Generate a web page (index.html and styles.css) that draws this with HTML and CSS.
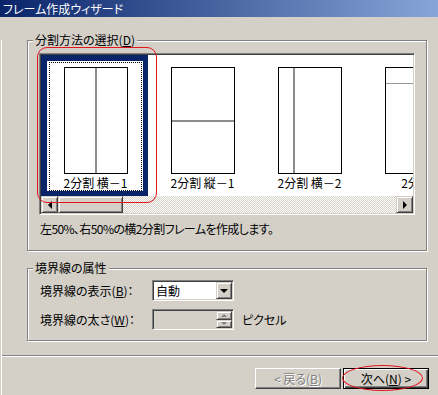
FILE: index.html
```html
<!DOCTYPE html>
<html lang="ja">

<head>
    <meta charset="UTF-8" />
    <meta name="viewport" content="width=device-width, initial-scale=1.0" />
    <link rel="stylesheet" href="styles.css">
    <title>フレーム作成ウィザード</title>
</head>

<body>

    <div class="window">
        <div class="titlebar">フレーム作成ウィザード</div>

        <div class="client">
            <!-- split type -->
            <div class="group group-split">
                <span class="group-title">分割方法の選択(<u>D</u>)</span>
                <div class="listview">
                    <div class="items">
                        <div class="item selected">
                            <div class="focus">
                                <div class="thumb cols"><div class="pane pane-half"></div></div>
                                <div class="caption">2分割 横－1</div>
                            </div>
                        </div>
                        <div class="item">
                            <div class="focus">
                                <div class="thumb rows"><div class="pane pane-half"></div></div>
                                <div class="caption">2分割 縦－1</div>
                            </div>
                        </div>
                        <div class="item">
                            <div class="focus">
                                <div class="thumb cols"><div class="pane pane-narrow"></div></div>
                                <div class="caption">2分割 横－2</div>
                            </div>
                        </div>
                        <div class="item">
                            <div class="focus">
                                <div class="thumb rows"><div class="pane pane-narrow"></div></div>
                                <div class="caption">2分割</div>
                            </div>
                        </div>
                    </div>
                    <div class="hscroll">
                        <div class="sb-btn"><span class="arrow arrow-left"></span></div>
                        <div class="sb-thumb"></div>
                        <div class="sb-track"></div>
                        <div class="sb-btn"><span class="arrow arrow-right"></span></div>
                    </div>
                </div>
                <p class="desc">左50%、右50%の横2分割フレームを作成します。</p>
            </div>

            <!-- border options -->
            <div class="group group-border">
                <span class="group-title">境界線の属性</span>
                <div class="row">
                    <span class="label">境界線の表示(<u>B</u>)：</span>
                    <div class="field">
                        <span class="value">自動</span>
                        <div class="drop-btn"><span class="arrow arrow-down"></span></div>
                    </div>
                </div>
                <div class="row">
                    <span class="label">境界線の太さ(<u>W</u>)：</span>
                    <div class="field disabled">
                        <span class="value"></span>
                        <div class="spin">
                            <div class="spin-btn"><span class="mini mini-up"></span></div>
                            <div class="spin-btn"><span class="mini mini-down"></span></div>
                        </div>
                    </div>
                    <span class="unit">ピクセル</span>
                </div>
            </div>

            <div class="separator"></div>

            <div class="buttons">
                <button class="btn" disabled>&lt; 戻る(<u>B</u>)</button>
                <button class="btn default">次へ(<u>N</u>) &gt;</button>
            </div>
        </div>

        <!-- red marks drawn over the dialog -->
        <div class="mark mark-item"></div>
        <div class="mark mark-next"></div>
    </div>

</body>

</html>
```

FILE: styles.css
```css
:root {
    --face: #d4d0c8;
    --shadow: #808080;
    --dark: #404040;
    --navy: #0a246a;
    --mark: #e2141a;
}

* {
    box-sizing: border-box;
}

body {
    margin: 0;
    background-color: var(--face);
    font-family: "Noto Sans CJK JP", sans-serif;
    font-size: 12px;
    line-height: 14px;
    color: #000;
    font-feature-settings: "palt";
}

u {
    text-decoration-thickness: 1px;
    text-underline-offset: 1px;
}

.window {
    position: relative;
    width: 438px;
    height: 395px;
    overflow: hidden;
}

.titlebar {
    height: 17px;
    line-height: 17px;
    padding-left: 3px;
    color: #fff;
    background: linear-gradient(to right, #0a246a, #86a6d8);
}

.client {
    margin-left: 1px;
    border-left: 1px solid #fff;
    height: 378px;
}

/* etched group box */
.group {
    position: relative;
    width: 400px;
    margin-left: 25px;
    border: 1px solid var(--shadow);
    box-shadow: inset 1px 1px #fff, 1px 1px #fff;
}

.group-title {
    position: absolute;
    top: -8px;
    left: 5px;
    padding: 0 2px;
    background-color: var(--face);
}

.group-split {
    margin-top: 23px;
    padding: 12px 11px 14px 11px;
}

.group-border {
    margin-top: 17px;
    padding: 11px 11px 10px 12px;
}

/* list view */
.listview {
    width: 376px;
    height: 162px;
    padding: 1px;
    background-color: #fff;
    border: 1px solid;
    border-color: var(--shadow) #fff #fff var(--shadow);
    box-shadow: inset 1px 1px var(--dark), inset -1px -1px var(--face);
}

.items {
    display: flex;
    height: 141px;
    overflow: hidden;
    background-color: #fff;
}

.item {
    flex: 0 0 107px;
    border: 6px solid transparent;
    border-bottom-width: 5px;
    border-right-width: 5px;
}

.item.selected {
    border-color: var(--navy);
}

.focus {
    display: flex;
    flex-direction: column;
    align-items: center;
    height: 129px;
    margin: 1px 1px 1px 2px;
    border: 1px dotted transparent;
}

.selected .focus {
    border-color: #000;
}

.thumb {
    display: flex;
    width: 64px;
    height: 107px;
    margin-top: 4px;
    border: 1px solid #000;
    background-color: #fff;
}

.thumb.rows {
    flex-direction: column;
}

.cols .pane {
    border-right: 2px solid #8c8c8c;
}

.rows .pane {
    border-bottom: 2px solid #8c8c8c;
}

.cols .pane-half {
    width: 32px;
}

.cols .pane-narrow {
    width: 16px;
}

.rows .pane-half {
    height: 54px;
}

.rows .pane-narrow {
    height: 16px;
    border-bottom-width: 1px;
    border-bottom-color: #999;
}

.caption {
    margin-top: 2px;
    white-space: nowrap;
    font-feature-settings: normal;
}

/* horizontal scroll bar */
.hscroll {
    display: flex;
    height: 17px;
}

.sb-btn,
.sb-thumb,
.drop-btn,
.spin-btn {
    display: flex;
    align-items: center;
    justify-content: center;
    background-color: var(--face);
    border: 1px solid;
    border-color: var(--face) var(--dark) var(--dark) var(--face);
    box-shadow: inset 1px 1px #fff, inset -1px -1px var(--shadow);
}

.sb-btn {
    flex: 0 0 17px;
}

.sb-thumb {
    flex: 0 0 65px;
}

.sb-track {
    flex: 1;
    background: repeating-conic-gradient(#fff 0 25%, var(--face) 0 50%) 0 0 / 2px 2px;
}

.arrow {
    width: 0;
    height: 0;
    border: 4px solid transparent;
}

.arrow-left {
    border-right-color: #000;
    border-left-width: 0;
}

.arrow-right {
    border-left-color: #000;
    border-right-width: 0;
}

.arrow-down {
    border-top-color: #000;
    border-bottom-width: 0;
}

.desc {
    margin: 7px 0 0 1px;
    letter-spacing: -0.6px;
}

/* form rows */
.row {
    display: flex;
    align-items: center;
    height: 21px;
}

.row + .row {
    margin-top: 8px;
}

.label {
    width: 112px;
}

.field {
    display: flex;
    width: 82px;
    height: 21px;
    padding: 1px;
    background-color: #fff;
    border: 1px solid;
    border-color: var(--shadow) #fff #fff var(--shadow);
    box-shadow: inset 1px 1px var(--dark), inset -1px -1px var(--face);
}

.field.disabled {
    background-color: var(--face);
}

.value {
    flex: 1;
    padding-left: 2px;
    line-height: 17px;
}

.drop-btn {
    width: 16px;
    height: 17px;
}

.spin {
    display: flex;
    flex-direction: column;
    width: 16px;
}

.spin-btn {
    height: 8.5px;
}

.mini {
    width: 0;
    height: 0;
    border: 3px solid transparent;
}

.mini-up {
    border-bottom-color: var(--shadow);
    border-top-width: 0;
}

.mini-down {
    border-top-color: var(--shadow);
    border-bottom-width: 0;
}

.unit {
    margin-left: 8px;
}

.separator {
    margin-top: 14px;
    height: 2px;
    border-top: 1px solid var(--shadow);
    border-bottom: 1px solid #fff;
}

/* wizard buttons */
.buttons {
    display: flex;
    justify-content: flex-end;
    gap: 2px;
    margin-top: 11px;
    padding-right: 9px;
}

.btn {
    width: 86px;
    height: 21px;
    padding: 0;
    font-family: inherit;
    font-size: 12px;
    font-feature-settings: "palt";
    color: #000;
    background-color: var(--face);
    border: 1px solid;
    border-color: #fff var(--dark) var(--dark) #fff;
    box-shadow: inset -1px -1px var(--shadow);
}

.btn:disabled {
    color: var(--shadow);
    text-shadow: 1px 1px #fff;
}

.btn.default {
    border-color: #000;
    box-shadow: inset 1px 1px #fff, inset -1px -1px var(--dark), inset -2px -2px var(--shadow);
}

/* red annotation marks */
.mark {
    position: absolute;
    border: 1px solid var(--mark);
}

.mark-item {
    left: 37px;
    top: 47px;
    width: 120px;
    height: 156px;
    border-radius: 10px;
}

.mark-next {
    left: 342px;
    top: 365px;
    width: 81px;
    height: 26px;
    border-radius: 50%;
}
```
